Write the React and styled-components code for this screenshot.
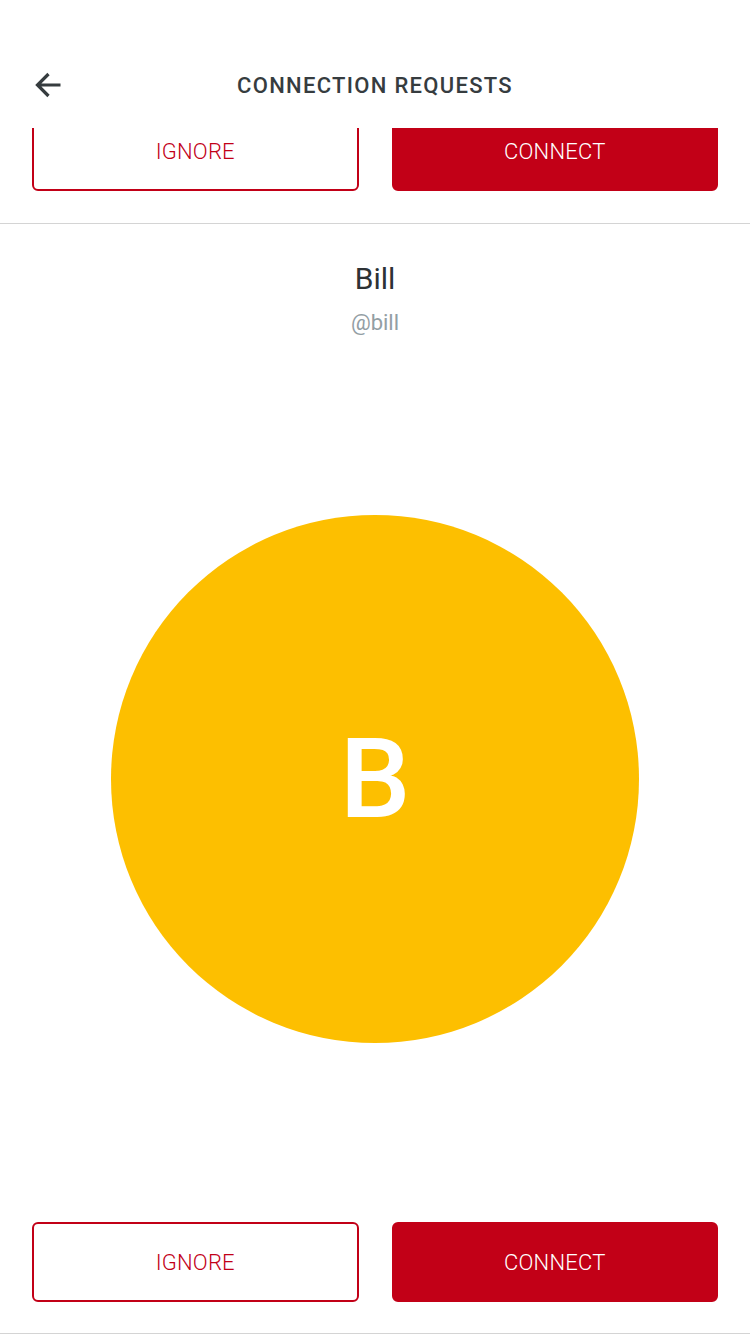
import React from "react";
import styled, { createGlobalStyle } from "styled-components";

const Global = createGlobalStyle`
  html, body { margin: 0; padding: 0; background: #fff; }
  body { font-family: Roboto, "Noto Sans", "Liberation Sans", sans-serif; -webkit-font-smoothing: antialiased; }
  * { box-sizing: border-box; }
`;

const RED = "#c20017";

const Page = styled.div`
  width: 750px;
  height: 1334px;
  overflow: hidden;
  display: flex;
  flex-direction: column;
  background: #fff;
`;

const Header = styled.header`
  flex: none;
  height: 128px;
  padding-top: 43px;
  background: #fff;
  position: relative;
  z-index: 2;
`;

const NavRow = styled.div`
  height: 84px;
  display: grid;
  grid-template-columns: 96px 1fr 96px;
  align-items: center;
`;

const BackButton = styled.button`
  border: none;
  background: none;
  padding: 0 0 0 34px;
  height: 40px;
  display: flex;
  align-items: center;
  cursor: pointer;
`;

const Title = styled.h1`
  margin: 0;
  text-align: center;
  font-size: 22px;
  font-weight: 500;
  letter-spacing: 1.3px;
  color: #363c3f;
`;

const List = styled.div`
  flex: 1;
  overflow: hidden;
`;

const Card = styled.section`
  display: flex;
  flex-direction: column;
  align-items: center;
  padding: ${(p) => (p.$clipped ? "0 32px 32px" : "37px 32px 31px")};
  border-bottom: 1px solid #d4d4d4;
`;

const Name = styled.div`
  font-size: 30px;
  line-height: 36px;
  color: #2d3235;
`;

const Handle = styled.div`
  margin-top: 13px;
  font-size: 22px;
  line-height: 26px;
  color: #939ea4;
`;

const Avatar = styled.div`
  margin: 179px 0;
  width: 528px;
  height: 528px;
  border-radius: 50%;
  background: ${(p) => p.$color};
  display: flex;
  align-items: center;
  justify-content: center;
  color: #fff;
  font-size: 112px;
  font-weight: 500;
  line-height: 1;
`;

const Actions = styled.div`
  width: 100%;
  display: grid;
  grid-template-columns: 1fr 1fr;
  gap: 33px;
  margin-top: ${(p) => (p.$clipped ? "-17px" : "0")};
`;

const ActionButton = styled.button`
  height: 80px;
  border-radius: 6px;
  border: 2px solid ${RED};
  background: ${(p) => (p.$primary ? RED : "#fff")};
  color: ${(p) => (p.$primary ? "#fff" : RED)};
  font-family: Roboto, "Noto Sans", sans-serif;
  font-size: 22px;
  font-weight: 300;
  letter-spacing: 0.2px;
  cursor: pointer;
`;

const BackIcon = () => (
  <svg width="28" height="28" viewBox="0 0 28 28" fill="none">
    <path
      d="M26.5 14H3.5M14.5 3L3.5 14L14.5 25"
      stroke="#363c3f"
      strokeWidth="3.2"
      strokeLinecap="butt"
      strokeLinejoin="miter"
    />
  </svg>
);

const ButtonRow = ({ clipped }) => (
  <Actions $clipped={clipped}>
    <ActionButton>IGNORE</ActionButton>
    <ActionButton $primary>CONNECT</ActionButton>
  </Actions>
);

export default function App() {
  return (
    <Page>
      <Global />
      <Header>
        <NavRow>
          <BackButton aria-label="Back">
            <BackIcon />
          </BackButton>
          <Title>CONNECTION REQUESTS</Title>
          <span />
        </NavRow>
      </Header>
      <List>
        <Card $clipped>
          <ButtonRow clipped />
        </Card>
        <Card>
          <Name>Bill</Name>
          <Handle>@bill</Handle>
          <Avatar $color="#fdbf00">B</Avatar>
          <ButtonRow />
        </Card>
      </List>
    </Page>
  );
}
